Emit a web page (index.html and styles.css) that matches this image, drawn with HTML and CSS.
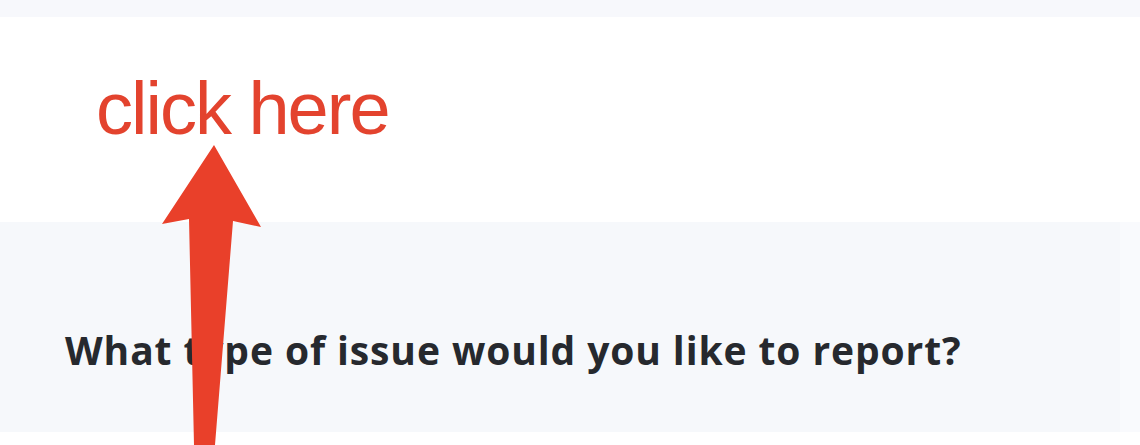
FILE: index.html
```html
<!DOCTYPE html>
<html lang="en">
<head>
<meta charset="utf-8">
<title>Report an issue</title>
<link rel="stylesheet" href="styles.css">
</head>
<body>
<div class="page">
  <div class="topbar"></div>
  <section class="hint">
    <span class="hint-text">click here</span>
  </section>
  <section class="panel-row">
    <div class="panel">
      <h2 class="question">What type of issue would you like to report?</h2>
    </div>
    <div class="gutter"></div>
  </section>
  <div class="bottom"></div>
  <svg class="arrow" width="1140" height="445" viewBox="0 0 1140 445" aria-hidden="true">
    <polygon points="214,145 261,227 233,221 215,445 194,445 189,219 162,224" fill="#e9402a"/>
  </svg>
</div>
</body>
</html>
```
FILE: styles.css
```css
html, body {
  margin: 0;
  padding: 0;
  background: #ffffff;
}
.page {
  position: relative;
  width: 1140px;
  height: 445px;
  overflow: hidden;
  display: flex;
  flex-direction: column;
}
.topbar {
  height: 17px;
  background: #f7f8fc;
  flex: none;
}
.hint {
  height: 205px;
  flex: none;
  box-sizing: border-box;
  padding: 55px 0 0 96px;
  background: #ffffff;
}
.hint-text {
  display: block;
  font-family: "Liberation Sans", Arial, sans-serif;
  font-size: 74px;
  line-height: 74px;
  letter-spacing: -2px;
  color: #e3432e;
}
.panel-row {
  height: 210px;
  flex: none;
  display: flex;
}
.panel {
  flex: 1;
  background: #f6f8fb;
  box-sizing: border-box;
  padding: 104px 0 0 65px;
}
.gutter {
  width: 20px;
  background: #f9fafd;
}
.question {
  margin: 0;
  font-family: "Open Sans", Lato, sans-serif;
  font-weight: 700;
  font-size: 39px;
  line-height: 48px;
  letter-spacing: 0.9px;
  color: #26292e;
}
.bottom {
  flex: 1;
  background: #ffffff;
}
.arrow {
  position: absolute;
  left: 0;
  top: 0;
}
```
